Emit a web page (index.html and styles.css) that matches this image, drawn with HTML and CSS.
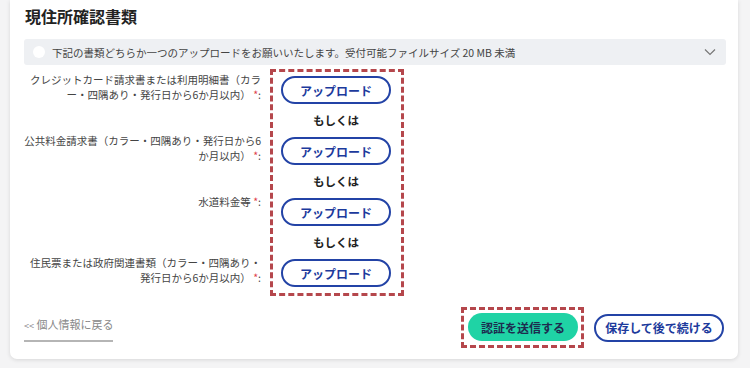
FILE: index.html
```html
<!DOCTYPE html>
<html lang="ja">
<head>
  <meta charset="UTF-8" />
  <meta name="viewport" content="width=device-width, initial-scale=1" />
  <title>現住所確認書類</title>
  <link rel="stylesheet" href="styles.css">
</head>
<body>
  <div class="card">
    <h2 class="card-title">現住所確認書類</h2>

    <div class="notice">
      <span class="notice-dot"></span>
      <span class="notice-text">下記の書類どちらか一つのアップロードをお願いいたします。受付可能ファイルサイズ 20 MB 未満</span>
      <svg class="notice-chevron" width="12" height="8" viewBox="0 0 12 8">
        <polyline points="1,1.5 6,6.5 11,1.5" fill="none" stroke="#777" stroke-width="1.2" />
      </svg>
    </div>

    <div class="doc-grid">
      <div class="doc-labels">
        <div class="doc-label">クレジットカード請求書または利用明細書（カラー・四隅あり・発行日から6か月以内） <span class="req">*</span>:</div>
        <div class="doc-label">公共料金請求書（カラー・四隅あり・発行日から6か月以内） <span class="req">*</span>:</div>
        <div class="doc-label">水道料金等 <span class="req">*</span>:</div>
        <div class="doc-label">住民票または政府関連書類（カラー・四隅あり・発行日から6か月以内） <span class="req">*</span>:</div>
      </div>

      <div class="upload-box">
        <button class="btn-upload" type="button">アップロード</button>
        <div class="or">もしくは</div>
        <button class="btn-upload" type="button">アップロード</button>
        <div class="or">もしくは</div>
        <button class="btn-upload" type="button">アップロード</button>
        <div class="or">もしくは</div>
        <button class="btn-upload" type="button">アップロード</button>
      </div>
    </div>

    <div class="card-footer">
      <a class="back-link" href="#"><span class="back-arrows">&lt;&lt;</span> 個人情報に戻る</a>
      <div class="footer-actions">
        <div class="submit-wrap">
          <button class="btn-submit" type="button">認証を送信する</button>
        </div>
        <button class="btn-save" type="button">保存して後で続ける</button>
      </div>
    </div>
  </div>
</body>
</html>
```

FILE: styles.css
```css
body {
  margin: 0;
  padding: 0 12px 10px 10px;
  background: #f4f4f5;
  font-family: "Noto Sans CJK JP", "Noto Sans", sans-serif;
  color: #333;
}
.card {
  background: #fff;
  border-radius: 0 0 7px 7px;
  box-shadow: 0 1px 4px rgba(0,0,0,0.12);
  padding: 4px 12px 11px 14px;
}
.card-title {
  margin: 0 0 11px 1px;
  font-size: 16px;
  font-weight: 700;
  color: #222;
  line-height: 24px;
}
.notice {
  display: flex;
  align-items: center;
  height: 26px;
  background: #eef0f3;
  border-radius: 3px;
  padding: 0 10px 0 9px;
}
.notice-dot {
  width: 12px;
  height: 12px;
  border-radius: 50%;
  background: #fff;
  margin-right: 7px;
  flex-shrink: 0;
}
.notice-text {
  flex: 1;
  font-size: 10.5px;
  color: #444;
  white-space: nowrap;
}
.notice-chevron {
  flex-shrink: 0;
}
.doc-grid {
  display: grid;
  grid-template-columns: 237px 134px;
  column-gap: 9px;
  align-items: start;
  margin-top: 4px;
}
.doc-labels {
  display: flex;
  flex-direction: column;
  padding-top: 3px;
}
.doc-label {
  height: 61px;
  font-size: 10.5px;
  line-height: 15px;
  color: #444;
  text-align: right;
  line-break: normal;
}
.doc-label:last-child {
  height: auto;
}
.req {
  color: #e0404a;
}
.upload-box {
  border: 3px dashed #b5474c;
  padding: 4px 10px 6px 8px;
  display: flex;
  flex-direction: column;
}
.btn-upload {
  height: 28px;
  border: 2px solid #2343a6;
  border-radius: 14px;
  background: #fff;
  color: #1c3a9c;
  font-family: inherit;
  font-size: 12px;
  font-weight: 700;
  cursor: pointer;
}
.or {
  height: 33px;
  line-height: 33px;
  text-align: center;
  font-size: 11.5px;
  font-weight: 700;
  color: #222;
}
.card-footer {
  display: flex;
  align-items: center;
  justify-content: space-between;
  margin-top: 11px;
}
.back-link {
  font-size: 11px;
  line-height: 15px;
  color: #888;
  text-decoration: none;
  padding: 4px 0 7px 0;
  border-bottom: 2px solid #b5b5b5;
}
.back-arrows {
  font-size: 9px;
}
.footer-actions {
  display: flex;
  align-items: center;
  gap: 10px;
  margin-right: 2px;
}
.submit-wrap {
  border: 3px dashed #b5474c;
  padding: 3px 3px 4px 4px;
  display: flex;
}
.btn-submit {
  width: 110px;
  height: 28px;
  border: none;
  border-radius: 14px;
  background: #1fd3a5;
  color: #1d2c4f;
  font-family: inherit;
  font-size: 12px;
  font-weight: 700;
  cursor: pointer;
}
.btn-save {
  width: 130px;
  height: 28px;
  border: 2px solid #2343a6;
  border-radius: 14px;
  background: #fff;
  color: #1c3a9c;
  font-family: inherit;
  font-size: 12px;
  font-weight: 700;
  cursor: pointer;
}
```
